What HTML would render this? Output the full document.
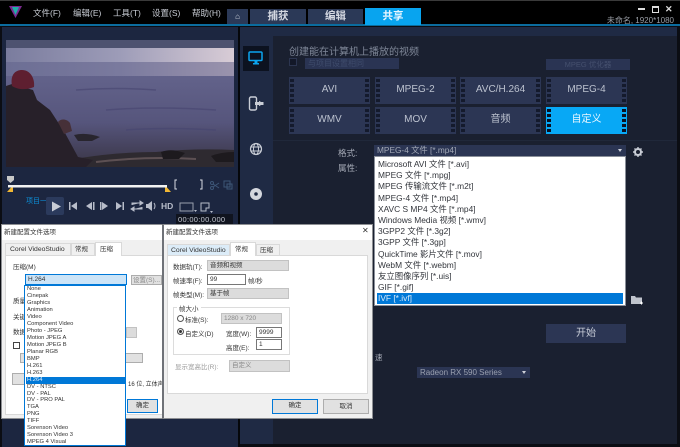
<!DOCTYPE html>
<html><head><meta charset="utf-8">
<style>
*{box-sizing:border-box;margin:0;padding:0}
html,body{width:680px;height:447px;overflow:hidden;background:#0b0d13}
body{position:relative;font-family:"Liberation Sans","Noto Sans CJK SC",sans-serif;font-size:8px;color:#000}
.a{position:absolute;white-space:nowrap}
.m{color:#c8ccd4;font-size:8.5px;top:7px}
.tab{position:absolute;top:9px;height:15px;background:#2b3957;color:#d5d9e2;font-size:10.5px;font-weight:bold;text-align:center;line-height:15px}
.fb{position:absolute;width:81px;height:27px;background:#2c3654;color:#bcc2cf;font-size:10px;text-align:center;line-height:26px}
.fb:before,.fb:after{content:"";position:absolute;top:0;bottom:0;width:4px;background:repeating-linear-gradient(#2c3654 0 2px,#141a2c 2px 5px)}
.fb:before{left:1px}.fb:after{right:1px}
.fb.on{background:#08a8f5;color:#eaf7ff}
.fb.on:before,.fb.on:after{background:repeating-linear-gradient(#08a8f5 0 2px,#0b1020 2px 5px)}
.li{position:absolute;left:3px;width:246px;height:11.2px;line-height:11px;font-size:8.4px;color:#33363c}
.cv{position:absolute;left:1px;width:99px;height:7px;line-height:7px;font-size:5.8px;color:#333;padding-left:1px}
.d{background:#f0f0f0;position:absolute;border:1px solid #8d8f93}
.bar{position:absolute;left:0;top:0;right:0;height:15px;background:#fff}
.sel{position:absolute;background:#dcdcdc;border:1px solid #c2c2c2;font-size:6.5px;color:#333;line-height:9px;padding-left:2px}
.t{position:absolute;font-size:6.5px;color:#333;white-space:nowrap}
.btn{position:absolute;background:#e1e1e1;border:1px solid #adadad;font-size:6.5px;text-align:center;color:#333}
.ic{position:absolute}
</style></head><body>
<!-- top bar -->
<div class="a" style="left:0;top:0;width:680px;height:24px;background:#000;border-top:1px solid #3a3a3a"></div>
<div class="a" style="left:0;top:24px;width:680px;height:2px;background:#0b6c9e"></div>
<svg class="ic" style="left:9px;top:6px" width="13" height="12" viewBox="0 0 13 12"><path d="M0 0h13L6.500 12z" fill="#7b2a90"/><path d="M3 1h7L6.500 9z" fill="#1fb0a8"/></svg>
<div class="a m" style="left:33px">文件(F)</div>
<div class="a m" style="left:73px">编辑(E)</div>
<div class="a m" style="left:113px">工具(T)</div>
<div class="a m" style="left:152px">设置(S)</div>
<div class="a m" style="left:192px">帮助(H)</div>
<div class="tab" style="left:227px;width:21px;font-size:8px">⌂</div>
<div class="tab" style="left:250px;width:56px">捕获</div>
<div class="tab" style="left:308px;width:55px">编辑</div>
<div class="tab" style="left:365px;top:8px;height:17px;width:56px;background:#08a4ef;color:#e9f6ff;line-height:17px">共享</div>
<div class="a" style="left:638px;top:8px;width:7px;height:2px;background:#ddd"></div>
<div class="a" style="left:652px;top:6px;width:7px;height:7px;border:1px solid #ddd;border-top-width:2px"></div>
<div class="a" style="left:665px;top:4px;color:#ddd;font-size:9px;font-weight:bold">✕</div>
<div class="a" style="right:6px;top:15px;font-size:8px;color:#9a9ea6">未命名, 1920*1080</div>
<!-- panels -->
<div class="a" style="left:2px;top:27px;width:236px;height:420px;background:#1c2640"></div>
<div class="a" style="left:238px;top:27px;width:2px;height:420px;background:#05070b"></div>
<div class="a" style="left:240px;top:27px;width:437px;height:417px;background:#1f2a44"></div>
<div class="a" style="left:273px;top:36px;width:404px;height:408px;background:#1a2030"></div>
<div class="a" style="left:273px;top:140px;width:404px;height:1px;background:#20283a"></div>
<!-- video -->
<svg class="ic" style="left:6px;top:40px" width="228" height="127" viewBox="0 0 228 127">
<defs>
<linearGradient id="w" x1="0" y1="0" x2="0" y2="1"><stop offset="0" stop-color="#71739a"/><stop offset=".3" stop-color="#62628a"/><stop offset=".65" stop-color="#56557c"/><stop offset=".85" stop-color="#45425c"/><stop offset="1" stop-color="#3a3545"/></linearGradient>
<linearGradient id="h" x1="0" y1="0" x2="1" y2="0"><stop offset="0" stop-color="#7a7c9e"/><stop offset=".5" stop-color="#9d9cb8"/><stop offset="1" stop-color="#d8ccd6"/></linearGradient>
<linearGradient id="h2" x1="0" y1="0" x2="1" y2="0"><stop offset="0" stop-color="#6c6e94"/><stop offset=".5" stop-color="#7a7a9e"/><stop offset="1" stop-color="#9a93ad"/></linearGradient>
</defs>
<rect width="228" height="127" fill="url(#w)"/>
<rect y="8" width="228" height="14" fill="url(#h)"/>
<rect y="22" width="228" height="14" fill="url(#h2)"/>
<rect width="228" height="8" fill="#4d5270"/>
<path d="M70 50q40-3 80 0M100 70q50-4 110 0M120 90q40-3 90 0" stroke="#464470" stroke-width="1.500" fill="none" opacity=".6"/>
<path d="M30 127Q90 112 150 112 190 108 228 110V127z" fill="#2e2a30"/>
<path d="M90 122q50-6 100-3" stroke="#7d6a6a" stroke-width="2" fill="none" opacity=".6"/>
<path d="M68 95q12-3 26 2l-8 4H72z" fill="#28252e"/>
<path d="M155 112q10-4 24 1l-6 6h-16zM205 116q10-4 23-4v10h-18z" fill="#1d1a1e"/>
<path d="M0 46L6 44 27 50 31 60 44 70 59 93 72 117 87 120 80 127H0z" fill="#272029"/>
<path d="M6 46C4 35 9 30 16 30 24 30 29 38 28 47 21 50 12 50 6 46z" fill="#5e1f30"/>
<path d="M52 82c3-4 9-3 12 1l2 8-8 3z" fill="#463038"/>
</svg>
<!-- scrub -->
<svg class="ic" style="left:6px;top:175px" width="228" height="22" viewBox="0 0 228 22">
<path d="M1 1h7v4L4.500 8 1 5z" fill="#c8c8c8"/>
<rect x="2" y="10" width="159" height="2.500" fill="#f2f2f2"/>
<path d="M1 17L5 12.500h2V17zM159 12.500h2l4 4.500h-6z" fill="#f1b733"/>
<path d="M171 5h-2v9h2M194 5h2v9h-2" fill="none" stroke="#d8dbe2" stroke-width="1"/>
<g stroke="#3d5676" fill="none"><circle cx="206" cy="13" r="1.500"/><circle cx="206" cy="8" r="1.500"/><path d="M207 9l6 4M207 12l6-4"/><rect x="218" y="6" width="6" height="6"/><rect x="221" y="9" width="5" height="5"/></g>
</svg>
<div class="a" style="left:26px;top:196px;color:#0c8fd8;font-size:7px">项目一</div>
<div class="a" style="left:46px;top:197px;width:18px;height:18px;background:#2b3a5c;border-radius:2px"></div>
<svg class="ic" style="left:46px;top:197px" width="172" height="18" viewBox="0 0 172 18" fill="#b8bdca">
<path d="M6 4.500l9 5-9 5z" fill="#c8ccd6"/>
<path d="M23 5h1.500v8H23zM31 5v8l-6-4zM46 5v8l-6-4zM47 5h1.500v8H47zM54 5h1.500v8H54zM56 5l6 4-6 4zM70 5l6 4-6 4zM76.500 5h1.500v8h-1.500z"/>
<path d="M86 8V6h8M94 4v4l3-2zM96 10v2h-8M88 14v-4l-3 2z" stroke="#b8bdca" stroke-width="1"/>
<path d="M100 7h2l4-3v10l-4-3h-2z"/>
<path d="M108 6q2 3 0 6" fill="none" stroke="#b8bdca"/>
<rect x="134" y="6" width="13" height="8" fill="none" stroke="#9aa0ae"/><path d="M155 6h8v5h-3v3h-5z" fill="none" stroke="#b8bdca"/>
<path d="M148 13h3l-1.500 2zM164 14h3l-1.500 2z"/>
</svg>
<div class="a" style="left:161px;top:201px;color:#b8bdca;font-size:8.500px;font-weight:bold">HD</div>
<div class="a" style="left:176px;top:214px;width:57px;height:10px;background:#10141f;color:#c2c6d0;font-size:7.500px;letter-spacing:.3px;line-height:11px;padding-left:2px">00:00:00.000</div>
<!-- sidebar -->
<div class="a" style="left:243px;top:46px;width:26px;height:25px;background:#0c1220"></div>
<svg class="ic" style="left:248px;top:51px" width="16" height="14" viewBox="0 0 16 14"><rect x="1" y="1" width="13" height="8.500" rx="1" fill="none" stroke="#0ba4ef" stroke-width="1.500"/><path d="M5 12h6v1.500H5zM6.500 10h3v2h-3z" fill="#0ba4ef"/></svg>
<svg class="ic" style="left:248px;top:96px" width="17" height="15" viewBox="0 0 17 15"><rect x="1.500" y="1" width="7" height="13" rx="1.500" fill="none" stroke="#c9cdd6" stroke-width="1.400"/><path d="M7 6h4V4.800L13 6h2.500v3H13l-2 1.200V9H7z" fill="#c9cdd6"/></svg>
<svg class="ic" style="left:249px;top:142px" width="14" height="14" viewBox="0 0 14 14" fill="none" stroke="#c9cdd6"><circle cx="7" cy="7" r="5.500" stroke-width="1.200"/><ellipse cx="7" cy="7" rx="2.500" ry="5.500"/><path d="M1.500 5h11M1.500 9h11"/></svg>
<svg class="ic" style="left:249px;top:187px" width="14" height="14" viewBox="0 0 14 14"><circle cx="7" cy="7" r="6" fill="#d4d7de"/><circle cx="7" cy="7" r="1.800" fill="#1f2a44"/></svg>
<!-- content -->
<div class="a" style="left:289px;top:43px;font-size:10px;color:#7f8798">创建能在计算机上播放的视频</div>
<div class="a" style="left:289px;top:58px;width:8px;height:8px;background:#131828;border:1px solid #2c3550"></div>
<div class="a" style="left:305px;top:58px;width:94px;height:11px;background:#2a3453;color:#3f4c6c;font-size:8px;line-height:11px;padding-left:3px">与项目设置相同</div>
<div class="a" style="left:546px;top:59px;width:84px;height:11px;background:#2a3453;color:#45506e;font-size:7.500px;line-height:11px;text-align:center">MPEG 优化器</div>
<div class="fb" style="left:289px;top:77px">AVI</div>
<div class="fb" style="left:375px;top:77px">MPEG-2</div>
<div class="fb" style="left:460px;top:77px">AVC/H.264</div>
<div class="fb" style="left:546px;top:77px">MPEG-4</div>
<div class="fb" style="left:289px;top:107px">WMV</div>
<div class="fb" style="left:375px;top:107px">MOV</div>
<div class="fb" style="left:460px;top:107px">音频</div>
<div class="fb on" style="left:546px;top:107px">自定义</div>
<div class="a" style="left:338px;top:147px;font-size:8.500px;color:#a8adb9">格式:</div>
<div class="a" style="left:338px;top:162px;font-size:8.500px;color:#a8adb9">属性:</div>
<div class="a" style="left:374px;top:145px;width:252px;height:11px;background:#2b3553;color:#a2a8b6;font-size:8.300px;line-height:11px;padding-left:3px">MPEG-4 文件 [*.mp4]</div>
<div class="a" style="left:618px;top:149px;border:2.500px solid transparent;border-top:3px solid #cfd2da"></div>
<svg class="ic" style="left:633px;top:147px" width="10" height="10" viewBox="0 0 10 10"><circle cx="5" cy="5" r="3" fill="none" stroke="#c9cdd6" stroke-width="2"/><path d="M5 0v2M5 8v2M0 5h2M8 5h2M1.500 1.500l1.500 1.500M7 7l1.500 1.500M8.500 1.500L7 3M3 7L1.500 8.500" stroke="#c9cdd6" stroke-width="1.400"/></svg>
<!-- dropdown -->
<div class="a" style="left:374px;top:156px;width:252px;height:150px;background:#fff;border:1px solid #8a8f99">
<div class="li" style="top:2px">Microsoft AVI 文件 [*.avi]</div>
<div class="li" style="top:13.200px">MPEG 文件 [*.mpg]</div>
<div class="li" style="top:24.400px">MPEG 传输流文件 [*.m2t]</div>
<div class="li" style="top:35.600px">MPEG-4 文件 [*.mp4]</div>
<div class="li" style="top:46.800px">XAVC S MP4 文件 [*.mp4]</div>
<div class="li" style="top:58px">Windows Media 视频 [*.wmv]</div>
<div class="li" style="top:69.200px">3GPP2 文件 [*.3g2]</div>
<div class="li" style="top:80.400px">3GPP 文件 [*.3gp]</div>
<div class="li" style="top:91.600px">QuickTime 影片文件 [*.mov]</div>
<div class="li" style="top:102.800px">WebM 文件 [*.webm]</div>
<div class="li" style="top:114px">友立图像序列 [*.uis]</div>
<div class="li" style="top:125.200px">GIF [*.gif]</div>
<div class="li" style="top:136.400px;left:2px;padding-left:1px;background:#0078d7;color:#dcecfa;height:11px">IVF [*.ivf]</div>
</div>
<svg class="ic" style="left:630px;top:295px" width="14" height="11" viewBox="0 0 14 11"><path d="M1 1h4l1 1.500h6V9H1z" fill="#c0c4cd"/><path d="M10 8h3M11.500 6.500v3" stroke="#fff"/></svg>
<div class="a" style="left:546px;top:324px;width:80px;height:19px;background:#2c3654;color:#c6cbd6;font-size:10px;line-height:19px;text-align:center">开始</div>
<div class="a" style="left:375px;top:352px;font-size:7.500px;color:#a8adb9">速</div>
<div class="a" style="left:417px;top:367px;width:113px;height:11px;background:#2b3553;color:#9aa0b0;font-size:8px;line-height:11px;padding-left:3px">Radeon RX 590 Series</div>
<div class="a" style="left:522px;top:371px;border:2.500px solid transparent;border-top:3px solid #cfd2da"></div>
<!-- dialog 1 -->
<div class="d" style="left:1px;top:224px;width:162px;height:195px">
<div class="bar"></div>
<div class="t" style="left:2px;top:1px">新建配置文件选项</div>
<div class="a" style="left:3px;top:30px;width:158px;height:160px;background:#fff;border:1px solid #d9d9d9"></div>
<div class="a" style="left:3px;top:18px;width:66px;height:13px;background:#f0f0f0;border:1px solid #d9d9d9;font-size:6.800px;color:#333;line-height:12px;padding-left:4px">Corel VideoStudio</div>
<div class="a" style="left:69px;top:18px;width:24px;height:13px;background:#f0f0f0;border:1px solid #d9d9d9;font-size:6.500px;color:#333;line-height:12px;padding-left:3px">常规</div>
<div class="a" style="left:93px;top:17px;width:27px;height:14px;background:#fff;border:1px solid #d9d9d9;border-bottom:0;font-size:6.500px;color:#333;line-height:13px;padding-left:4px">压缩</div>
<div class="t" style="left:11px;top:36px">压缩(M)</div>
<div class="a" style="left:23px;top:49px;width:102px;height:11px;background:#cce4f7;border:1px solid #0078d7;font-size:6.500px;line-height:9px;color:#333;padding-left:2px">H.264</div>
<div class="btn" style="left:129px;top:50px;width:31px;height:10px;color:#888;line-height:9px">设置(S)...</div>
<div class="t" style="left:11px;top:70px">质量</div>
<div class="t" style="left:11px;top:86px">关键</div>
<div class="t" style="left:11px;top:101px">数据</div>
<div class="sel" style="left:124px;top:102px;width:11px;height:11px"></div>
<div class="a" style="left:11px;top:117px;width:7px;height:7px;background:#fff;border:1px solid #444"></div>
<div class="btn" style="left:18px;top:128px;width:123px;height:10px"></div>
<div class="btn" style="left:10px;top:148px;width:14px;height:12px"></div>
<div class="t" style="left:126px;top:154px;font-size:6px">16 位, 立体声</div>
<div class="btn" style="left:125px;top:174px;width:31px;height:14px;border:1.500px solid #0078d7;line-height:11px">确定</div>
</div>
<div class="a" style="left:24px;top:285px;width:102px;height:161px;background:#fff;border:1px solid #0078d7">
<div class="cv" style="top:0">None</div><div class="cv" style="top:7px">Cinepak</div><div class="cv" style="top:14px">Graphics</div><div class="cv" style="top:21px">Animation</div><div class="cv" style="top:27.900px">Video</div><div class="cv" style="top:34.900px">Component Video</div><div class="cv" style="top:41.800px">Photo - JPEG</div><div class="cv" style="top:48.800px">Motion JPEG A</div><div class="cv" style="top:55.700px">Motion JPEG B</div><div class="cv" style="top:62.700px">Planar RGB</div><div class="cv" style="top:69.600px">BMP</div><div class="cv" style="top:76.600px">H.261</div><div class="cv" style="top:83.500px">H.263</div>
<div class="cv" style="top:90.500px;background:#0078d7;color:#e2eefa">H.264</div>
<div class="cv" style="top:97.500px">DV - NTSC</div><div class="cv" style="top:104.500px">DV - PAL</div><div class="cv" style="top:111.400px">DV - PRO PAL</div><div class="cv" style="top:118.400px">TGA</div><div class="cv" style="top:125.300px">PNG</div><div class="cv" style="top:132.300px">TIFF</div><div class="cv" style="top:139.200px">Sorenson Video</div><div class="cv" style="top:146.200px">Sorenson Video 3</div><div class="cv" style="top:153.100px">MPEG 4 Visual</div>
</div>
<!-- dialog 2 -->
<div class="d" style="left:162px;top:224px;width:211px;height:195px;border-left:2px solid #6f7278">
<div class="bar"></div>
<div class="t" style="left:2px;top:1px">新建配置文件选项</div>
<div class="t" style="left:198px;top:1px;font-size:8px">✕</div>
<div class="a" style="left:3px;top:30px;width:201px;height:139px;background:#fff;border:1px solid #d9d9d9"></div>
<div class="a" style="left:3px;top:19px;width:63px;height:12px;background:#dcecf8;border:1px solid #d9d9d9;font-size:6.800px;color:#333;line-height:11px;padding-left:3px">Corel VideoStudio</div>
<div class="a" style="left:66px;top:17px;width:26px;height:14px;background:#fff;border:1px solid #d9d9d9;border-bottom:0;font-size:6.500px;color:#333;line-height:13px;padding-left:4px">常规</div>
<div class="a" style="left:92px;top:19px;width:24px;height:12px;background:#f0f0f0;border:1px solid #d9d9d9;font-size:6.500px;color:#333;line-height:11px;padding-left:3px">压缩</div>
<div class="t" style="left:9px;top:36px">数据轨(T):</div>
<div class="sel" style="left:43px;top:35px;width:82px;height:11px">音频和视频</div>
<div class="t" style="left:9px;top:50px">帧速率(F):</div>
<div class="sel" style="left:43px;top:49px;width:39px;height:11px;background:#fff;border-color:#777">99</div>
<div class="t" style="left:84px;top:50px">帧/秒</div>
<div class="t" style="left:9px;top:64px">帧类型(M):</div>
<div class="sel" style="left:43px;top:63px;width:82px;height:11px">基于帧</div>
<div class="a" style="left:9px;top:82px;width:117px;height:48px;border:1px solid #dcdcdc"></div>
<div class="t" style="left:13px;top:78px;background:#fff;padding:0 2px">帧大小</div>
<div class="a" style="left:13px;top:90px;width:7px;height:7px;border-radius:50%;border:1px solid #555;background:#fff"></div>
<div class="t" style="left:21px;top:89px">标准(S):</div>
<div class="sel" style="left:57px;top:88px;width:61px;height:11px;color:#888">1280 x 720</div>
<div class="a" style="left:13px;top:103px;width:7px;height:7px;border-radius:50%;border:1px solid #555;background:#333;box-shadow:inset 0 0 0 1px #fff"></div>
<div class="t" style="left:21px;top:103px">自定义(D)</div>
<div class="t" style="left:62px;top:103px">宽度(W):</div>
<div class="sel" style="left:92px;top:102px;width:26px;height:11px;background:#fff;border-color:#777">9999</div>
<div class="t" style="left:62px;top:117px">高度(E):</div>
<div class="sel" style="left:92px;top:114px;width:26px;height:11px;background:#fff;border-color:#777">1</div>
<div class="t" style="left:11px;top:136px;color:#999">显示宽高比(R):</div>
<div class="sel" style="left:65px;top:135px;width:61px;height:12px;color:#888">自定义</div>
<div class="btn" style="left:108px;top:174px;width:46px;height:15px;border:1.500px solid #0078d7;line-height:12px">确定</div>
<div class="btn" style="left:159px;top:174px;width:46px;height:15px;line-height:13px">取消</div>
</div>
</body></html>
